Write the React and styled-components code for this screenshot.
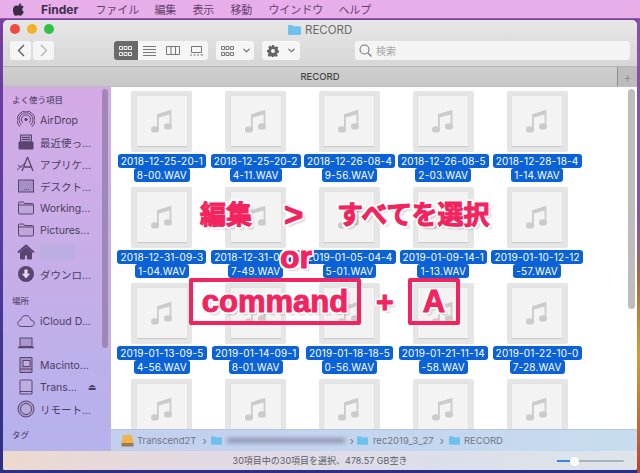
import React from "react"
import styled, { createGlobalStyle } from "styled-components"

const sans = `Inter, "Noto Sans CJK JP", "Liberation Sans", sans-serif`
const ink = "#5b4470"

const files = [
  ["2018-12-25-20-1", "8-00.WAV"],
  ["2018-12-25-20-2", "4-11.WAV"],
  ["2018-12-26-08-4", "9-56.WAV"],
  ["2018-12-26-08-5", "2-03.WAV"],
  ["2018-12-28-18-4", "1-14.WAV"],
  ["2018-12-31-09-3", "1-04.WAV"],
  ["2018-12-31-09-3", "7-49.WAV"],
  ["2019-01-05-04-4", "5-01.WAV"],
  ["2019-01-09-14-1", "1-13.WAV"],
  ["2019-01-10-12-12", "-57.WAV"],
  ["2019-01-13-09-5", "4-56.WAV"],
  ["2019-01-14-09-1", "8-01.WAV"],
  ["2019-01-18-18-5", "0-56.WAV"],
  ["2019-01-21-11-14", "-58.WAV"],
  ["2019-01-22-10-0", "7-28.WAV"],
  ["", ""],
  ["", ""],
  ["", ""],
  ["", ""],
  ["", ""],
]

const menus = [
  ["ファイル", 17],
  ["編集", 15],
  ["表示", 16],
  ["移動", 16],
  ["ウインドウ", 16],
  ["ヘルプ", 15],
]

const Folder = ({ w = 13, h = 10, color = "#6fc0ec" }) => (
  <svg width={w} height={h} viewBox="0 0 13 10">
    <path d="M0 1.2C0 .5.5 0 1.2 0h3.1l1.2 1.3h6.3c.7 0 1.2.5 1.2 1.2v6.3c0 .7-.5 1.2-1.2 1.2H1.2C.5 10 0 9.5 0 8.8z" fill={color} />
  </svg>
)

const Note = () => (
  <svg width="22" height="24" viewBox="0 0 22 24" fill="#cbcbcb">
    <path d="M6 5.2 20.4.8v16.6h-1.8V5.4L7.8 8.6v11.6H6z" />
    <ellipse cx="4" cy="20.4" rx="4" ry="3.2" />
    <ellipse cx="17" cy="17.4" rx="4" ry="3.2" />
  </svg>
)

const Glyph = ({ children }) => (
  <svg width="18" height="18" viewBox="0 0 18 18" fill="none" stroke={ink} strokeWidth="1">
    {children}
  </svg>
)

const AirDropIcon = () => (
  <Glyph>
    <circle cx="9" cy="8.5" r="1.2" fill={ink} />
    <path d="M6 12a4.6 4.6 0 1 1 6 0M4.4 14a7 7 0 1 1 9.2 0M3 15.7a9 9 0 1 1 12 0" />
  </Glyph>
)
const RecentIcon = () => (
  <Glyph>
    <rect x="3.5" y="2" width="11" height="7" fill="#a98fc4" />
    <path d="M5 4.5h8M5 6.5h8" />
    <path d="M2 9h14v7H2z" fill={ink} />
  </Glyph>
)
const AppsIcon = () => (
  <Glyph>
    <path d="M10.5 2 5 16M10.5 2 16 16M6.5 12h8" strokeWidth="1.3" />
    <path d="M0 15 8 8M1 10.5l4 1.5" />
  </Glyph>
)
const DesktopIcon = () => (
  <Glyph>
    <rect x="1.5" y="3" width="15" height="12" fill="#a58fc8" />
    <path d="M7 12.5h.8M9 12.5h.8M11 12.5h.8" />
  </Glyph>
)
const FolderIcon = () => (
  <Glyph>
    <path d="M1.5 4c0-.6.4-1 1-1h4l1.2 1.5h7.8c.6 0 1 .4 1 1V14c0 .6-.4 1-1 1h-13c-.6 0-1-.4-1-1z" fill="#bda6d8" />
    <path d="M1.5 6h15" />
  </Glyph>
)
const HomeIcon = () => (
  <Glyph>
    <path d="M1 9.5 9 2.5l8 7" strokeWidth="1.8" />
    <path d="M3.5 9v7h4v-4h3v4h4V9L9 4.5z" fill={ink} />
  </Glyph>
)
const DownloadIcon = () => (
  <svg width="18" height="18" viewBox="0 0 18 18">
    <circle cx="9" cy="9" r="8" fill={ink} />
    <path d="M7.4 4.5h3.2v4.2h2.6L9 13.4 4.8 8.7h2.6z" fill="#e4d8f2" />
  </svg>
)
const CloudIcon = () => (
  <Glyph>
    <path d="M4.5 14.5C2.2 14.5.8 13 .8 11.3c0-1.7 1.2-3 2.9-3.2C4.2 5.3 6.3 3.5 8.800 3.5c2.7 0 4.7 2 5 4.5 1.9.2 3.4 1.5 3.4 3.3 0 1.8-1.5 3.2-3.5 3.2z" />
  </Glyph>
)
const LaptopIcon = () => (
  <Glyph>
    <rect x="3" y="4" width="12" height="8.5" fill="#a997cc" />
    <path d="M1 13.5h16" strokeWidth="1.6" />
  </Glyph>
)
const MacDriveIcon = () => (
  <Glyph>
    <path d="M3 1.5h12v15H3z" fill="#a58fc4" />
    <rect x="6" y="4.5" width="7" height="6" fill="#c0aedb" />
    <path d="M3 13h12" />
  </Glyph>
)
const DriveIcon = () => (
  <Glyph>
    <path d="M4 2h10c.6 0 1 .4 1 1v13H3V3c0-.6.4-1 1-1z" fill="#bcaee0" />
    <path d="M3 13.5h12" />
  </Glyph>
)
const DiscIcon = () => (
  <Glyph>
    <circle cx="9" cy="9" r="8" fill="#a99ad0" />
    <circle cx="9" cy="9" r="5.5" fill="#b6aadb" />
  </Glyph>
)

const places = [
  { icon: <CloudIcon />, label: "iCloud D..." },
  { icon: <LaptopIcon />, label: "" },
  { icon: <MacDriveIcon />, label: "Macinto..." },
  { icon: <DriveIcon />, label: "Trans...", eject: true },
  { icon: <DiscIcon />, label: "リモート…" },
]

const favourites = [
  { icon: <AirDropIcon />, label: "AirDrop" },
  { icon: <RecentIcon />, label: "最近使っ…" },
  { icon: <AppsIcon />, label: "アプリケ…" },
  { icon: <DesktopIcon />, label: "デスクト…" },
  { icon: <FolderIcon />, label: "Working..." },
  { icon: <FolderIcon />, label: "Pictures..." },
  { icon: <HomeIcon />, hidden: true },
  { icon: <DownloadIcon />, label: "ダウンロ…" },
]

export default function App() {
  return (
    <Desktop>
      <GlobalStyle />
      <MenuBar>
        <AppleLogo viewBox="0 0 14 16">
          <path d="M10.3 0c.1 1.1-.3 2.1-.9 2.9-.7.8-1.7 1.3-2.6 1.2C6.700 3 7.200 2 7.800 1.300 8.400.6 9.500.1 10.300 0zM13.500 11.400c-.4.9-.6 1.300-1.100 2.100-.7 1.100-1.700 2.400-2.900 2.400-1.100 0-1.400-.7-2.900-.7s-1.800.7-2.900.7c-1.200 0-2.200-1.200-2.900-2.300C-.2 10.600-.4 7 .8 5.100c.9-1.300 2.200-2.100 3.500-2.100s2.100.7 3.100.7c1 0 1.600-.7 3.100-.7 1.100 0 2.300.6 3.100 1.700-2.800 1.500-2.300 5.500.9 6.700z" />
        </AppleLogo>
        <AppName>Finder</AppName>
        {menus.map(([name, gap]) => (
          <MenuItem key={name} $gap={gap}>{name}</MenuItem>
        ))}
      </MenuBar>

      <Window>
        <TitleBar>
          <Lights>
            <Light $color="#f0493e" />
            <Light $color="#f6b026" />
            <Light $color="#2fc244" />
          </Lights>
          <WindowTitle>
            <Folder />
            RECORD
          </WindowTitle>
          <Toolbar>
            <NavGroup>
              <NavButton>
                <svg width="8" height="13" viewBox="0 0 8 13" fill="none" stroke="#555" strokeWidth="1.3"><path d="M7 1 1.5 6.5 7 12" /></svg>
              </NavButton>
              <NavButton>
                <svg width="8" height="13" viewBox="0 0 8 13" fill="none" stroke="#b5b5b5" strokeWidth="1.3"><path d="M1 1l5.500 5.500L1 12" /></svg>
              </NavButton>
            </NavGroup>
            <ViewGroup>
              <ViewButton $active>
                <GridGlyph color="#f0f0f0" />
              </ViewButton>
              <ViewButton>
                <svg width="13" height="10" viewBox="0 0 13 10" stroke="#777" strokeWidth="1"><path d="M0 .5h13M0 3.5h13M0 6.5h13M0 9.5h13" /></svg>
              </ViewButton>
              <ViewButton>
                <svg width="14" height="9" viewBox="0 0 14 9" fill="none" stroke="#777" strokeWidth="1"><path d="M.5.5h13v8H.5zM5 .5v8M9.5.5v8" /></svg>
              </ViewButton>
              <ViewButton>
                <svg width="13" height="10" viewBox="0 0 13 10" fill="none" stroke="#777" strokeWidth="1"><path d="M1.5.5h10v6h-10zM0 9h2M3.5 9h2M7 9h2M10.5 9H13" /></svg>
              </ViewButton>
            </ViewGroup>
            <DropButton>
              <GridGlyph color="#777" />
              <Chevron />
            </DropButton>
            <DropButton>
              <svg width="12" height="12" viewBox="0 0 12 12" fill="#666">
                <path d="M4.900 0h2.200l.3 1.600 1.100.5L9.900 1.200l1.500 1.600-.9 1.300.5 1.100 1 .2v2.200l-1.600.3-.5 1.100.9 1.400-1.500 1.500-1.400-.9-1.100.5-.3 1.500H4.900l-.3-1.500-1.100-.5-1.400.9L.6 9.900l.9-1.400-.5-1.100L0 7.100V4.900l1.600-.3.5-1.100-.9-1.300 1.500-1.600 1.400.9 1.100-.5zM6 4a2 2 0 1 0 0 4 2 2 0 0 0 0-4z" />
              </svg>
              <Chevron />
            </DropButton>
            <SearchBox>
              <svg width="13" height="13" viewBox="0 0 13 13" fill="none" stroke="#777" strokeWidth="1.1"><circle cx="5.5" cy="5.5" r="4.5" /><path d="m9 9 3.5 3.5" /></svg>
              <span>検索</span>
            </SearchBox>
          </Toolbar>
        </TitleBar>

        <TabBar>
          <TabTitle>RECORD</TabTitle>
          <AddTab>+</AddTab>
        </TabBar>

        <Body>
          <Sidebar>
            <SideHeading>よく使う項目</SideHeading>
            {favourites.map((f, i) => (
              <SideRow key={i}>
                {f.icon}
                {f.hidden ? <HiddenName /> : <span>{f.label}</span>}
              </SideRow>
            ))}
            <SideHeading $top={10}>場所</SideHeading>
            {places.map((p, i) => (
              <SideRow key={i}>
                {p.icon}
                <span>{p.label}</span>
                {p.eject && <Eject>⏏</Eject>}
              </SideRow>
            ))}
            <SideHeading $top={9}>タグ</SideHeading>
            <SideScroll />
          </Sidebar>

          <Main>
            <Files>
              <FileGrid>
                {files.map((f, i) => (
                  <FileCell key={i}>
                    <Thumb>
                      <ThumbInner><Note /></ThumbInner>
                    </Thumb>
                    {f[0] && (
                      <Name>
                        <NameLine>{f[0]}</NameLine>
                        <NameLine>{f[1]}</NameLine>
                      </Name>
                    )}
                  </FileCell>
                ))}
              </FileGrid>
              <MainScroll />
            </Files>
            <PathBar>
              <svg width="13" height="12" viewBox="0 0 13 12">
                <path d="M2 0h9l1.500 8h-12z" fill="#f0b24a" />
                <path d="M.5 8h12v3.500H.5z" fill="#9a7a50" />
              </svg>
              <PathText $gap={3}>Transcend2T</PathText>
              <PathSep $left={6}>›</PathSep>
              <PathFolder $left={4}><Folder w={11} h={9} /></PathFolder>
              <BlurName />
              <PathSep $left={5}>›</PathSep>
              <PathFolder $left={3}><Folder w={11} h={9} /></PathFolder>
              <PathText $gap={5}>rec2019_3_27</PathText>
              <PathSep $left={6}>›</PathSep>
              <PathFolder $left={5}><Folder w={11} h={9} /></PathFolder>
              <PathText $gap={4}>RECORD</PathText>
            </PathBar>
          </Main>
        </Body>

        <StatusBar>
          <StatusText>30項目中の30項目を選択、478.57 GB空き</StatusText>
          <Slider>
            <SliderFill />
            <SliderKnob />
          </Slider>
        </StatusBar>

        <Callout $x={197} $y={177} $size={26}>編集</Callout>
        <Callout $x={281} $y={177} $size={33}>&gt;</Callout>
        <Callout $x={334} $y={177} $size={26}>すべてを選択</Callout>
        <Callout $x={277} $y={219} $size={32}>or</Callout>
        <KeyBox $x={186} $w={172}><Callout as="span" $static $size={31}>command</Callout></KeyBox>
        <Callout $x={373} $y={264} $size={30}>+</Callout>
        <KeyBox $x={405} $w={52}><Callout as="span" $static $size={31}>A</Callout></KeyBox>
      </Window>
    </Desktop>
  )
}

const GridGlyph = ({ color }) => (
  <svg width="13" height="10" viewBox="0 0 13 10" fill="none" stroke={color} strokeWidth="1">
    <path d="M.5.5h3v3h-3zM5 .5h3v3H5zM9.5.5h3v3h-3zM.5 6.5h3v3h-3zM5 6.5h3v3H5zM9.5 6.5h3v3h-3z" />
  </svg>
)

const Chevron = () => (
  <svg width="7" height="5" viewBox="0 0 7 5" fill="none" stroke="#666" strokeWidth="1.1"><path d="m.5.8 3 3 3-3" /></svg>
)

const GlobalStyle = createGlobalStyle`
  html, body { margin: 0; padding: 0; }
  body { font-family: ${sans}; width: 640px; height: 473px; overflow: hidden; }
  * { box-sizing: border-box; }
`

const Desktop = styled.div`
  width: 640px;
  height: 473px;
  overflow: hidden;
  display: flex;
  flex-direction: column;
  background:
    linear-gradient(180deg, #8a4fa6 0%, #8a4fa6 45%, #a8703a 60%, #d0a030 75%, #c04030 100%) right top / 3px 100% no-repeat,
    linear-gradient(180deg, #7a3f9f 0%, #4f3a9e 55%, #2c2f80 100%);
`

const MenuBar = styled.div`
  height: 19px;
  flex: none;
  display: flex;
  align-items: center;
  padding-left: 13px;
  background: #e8aeea;
  border-bottom: 1px solid #93599f;
  font-size: 11px;
  color: #64406f;
`

const AppleLogo = styled.svg`
  width: 11px;
  height: 13px;
  fill: #3a2d42;
`

const AppName = styled.b`
  margin-left: 17px;
  font-size: 12px;
  color: #3d2f4a;
`

const MenuItem = styled.span`
  margin-left: ${p => p.$gap}px;
`

const Window = styled.div`
  position: relative;
  width: 634px;
  height: 450px;
  margin: 1px 0 0 3px;
  display: flex;
  flex-direction: column;
  overflow: hidden;
  border-radius: 5px 5px 2px 2px;
  background: #ddd;
`

const TitleBar = styled.div`
  height: 46px;
  flex: none;
  background: linear-gradient(180deg, #e7e7e7, #d6d6d6);
  position: relative;
  padding: 21px 7px 0;
`

const Lights = styled.div`
  position: absolute;
  left: 7px;
  top: 4px;
  display: flex;
  gap: 7px;
`

const Light = styled.i`
  width: 10px;
  height: 10px;
  border-radius: 50%;
  background: ${p => p.$color};
`

const WindowTitle = styled.div`
  position: absolute;
  left: 285px;
  top: 3px;
  display: flex;
  align-items: center;
  gap: 4px;
  font-size: 11.5px;
  color: #6a6a6a;
`

const Toolbar = styled.div`
  display: flex;
  align-items: center;
  height: 19px;
`

const NavGroup = styled.div`
  display: flex;
  gap: 2px;
  width: 104px;
`

const NavButton = styled.div`
  width: 21px;
  height: 19px;
  display: flex;
  align-items: center;
  justify-content: center;
  background: #f5f5f5;
  border-radius: 3px;
`

const ViewGroup = styled.div`
  display: flex;
  width: 94px;
  height: 19px;
  background: #f5f5f5;
  border-radius: 3px;
  overflow: hidden;
`

const ViewButton = styled.div`
  flex: 1;
  display: flex;
  align-items: center;
  justify-content: center;
  background: ${p => (p.$active ? "#6a6a6a" : "transparent")};
`

const DropButton = styled.div`
  width: 38px;
  height: 19px;
  margin-left: 8px;
  display: flex;
  align-items: center;
  justify-content: center;
  gap: 9px;
  background: #f5f5f5;
  border-radius: 3px;
`

const SearchBox = styled.div`
  width: 275px;
  height: 19px;
  margin-left: 55px;
  padding-left: 4px;
  display: flex;
  align-items: center;
  gap: 4px;
  background: #f4f4f4;
  border-radius: 3px;
  font-size: 10px;
  color: #a5a5a5;
`

const TabBar = styled.div`
  height: 21px;
  flex: none;
  position: relative;
  display: flex;
  align-items: center;
  justify-content: center;
  background: linear-gradient(180deg, #cfcfcf, #c6c6c6);
  border-top: 1px solid #b5b5b5;
  border-bottom: 1px solid #bdbdbd;
`

const TabTitle = styled.span`
  font-size: 9.5px;
  font-weight: 500;
  color: #444;
`

const AddTab = styled.span`
  position: absolute;
  right: 0;
  top: 0;
  bottom: 0;
  width: 20px;
  display: flex;
  align-items: center;
  justify-content: center;
  background: #bcbcbc;
  border-left: 1px solid #8f8f8f;
  color: #8a8a8a;
  font-size: 14px;
  font-weight: 300;
`

const Body = styled.div`
  flex: 1;
  min-height: 0;
  display: flex;
`

const Sidebar = styled.div`
  width: 108px;
  flex: none;
  position: relative;
  padding: 7px 0 0 6px;
  background: linear-gradient(180deg, #d4aae6 0%, #c6aee8 50%, #b5b2ec 100%);
  border-right: 1px solid #c2b2dc;
  overflow: hidden;
`

const SideHeading = styled.div`
  height: 12px;
  line-height: 12px;
  margin: ${p => p.$top || 0}px 0 3px 3px;
  font-size: 8.5px;
  font-weight: 500;
  color: #5c4b72;
`

const SideRow = styled.div`
  height: 22px;
  display: flex;
  align-items: center;
  gap: 5px;
  padding-left: 8px;
  font-size: 10.5px;
  white-space: nowrap;
  color: #4a3c63;
`

const HiddenName = styled.i`
  width: 35px;
  height: 15px;
  background: #bcaee2;
`

const Eject = styled.span`
  margin-left: 6px;
  font-size: 9px;
  font-family: "DejaVu Sans", sans-serif;
`

const SideScroll = styled.div`
  position: absolute;
  right: 2px;
  top: 2px;
  width: 6px;
  height: 259px;
  border-radius: 3px;
  background: #9f88b8;
`

const Main = styled.div`
  flex: 1;
  min-width: 0;
  display: flex;
  flex-direction: column;
`

const Files = styled.div`
  flex: 1;
  min-height: 0;
  position: relative;
  overflow: hidden;
  background: #fff;
  padding: 4px 0 0 4px;
`

const FileGrid = styled.div`
  display: grid;
  grid-template-columns: repeat(5, 93.8px);
  grid-auto-rows: 96px;
`

const FileCell = styled.div`
  display: flex;
  flex-direction: column;
  align-items: center;
`

const Thumb = styled.div`
  width: 61px;
  height: 61px;
  flex: none;
  display: flex;
  align-items: center;
  justify-content: center;
  background: #e5e5e5;
  border-radius: 2px;
`

const ThumbInner = styled.div`
  width: 50px;
  height: 51px;
  display: flex;
  align-items: center;
  justify-content: center;
  background: #f3f3f3;
  border-bottom: 1px solid #c9c9c9;
  box-shadow: 0 0 1px #cfcfcf;
`

const Name = styled.div`
  margin-top: 2px;
  display: flex;
  flex-direction: column;
  align-items: center;
`

const NameLine = styled.span`
  height: 14px;
  line-height: 14px;
  padding: 0 3px;
  background: #0b62d6;
  border-radius: 3px;
  font-size: 10px;
  letter-spacing: .2px;
  white-space: nowrap;
  color: #fff;
`

const MainScroll = styled.div`
  position: absolute;
  right: 2px;
  top: 2px;
  width: 7px;
  height: 220px;
  border-radius: 4px;
  background: #bdbdbd;
`

const PathBar = styled.div`
  height: 22px;
  flex: none;
  display: flex;
  align-items: center;
  padding-left: 10px;
  background: linear-gradient(90deg, #c2cfee, #c4d6ee 60%, #c8dcef);
  border-top: 1px solid #b8c4e0;
`

const PathText = styled.span`
  margin-left: ${p => p.$gap}px;
  font-size: 9.5px;
  color: #6f7688;
`

const PathSep = styled.span`
  margin-left: ${p => p.$left}px;
  font-size: 11px;
  color: #6f7688;
`

const PathFolder = styled.span`
  display: flex;
  margin-left: ${p => p.$left}px;
`

const BlurName = styled.i`
  width: 118px;
  height: 5px;
  margin-left: 5px;
  background: #8d95b0;
  filter: blur(2px);
`

const StatusBar = styled.div`
  height: 19px;
  flex: none;
  position: relative;
  display: flex;
  align-items: center;
  justify-content: center;
  background: linear-gradient(90deg, #ecd9cf, #e2d9e6 35%, #dbdfea 70%, #dde4ea);
`

const StatusText = styled.span`
  font-size: 9px;
  color: #5c5c66;
`

const Slider = styled.div`
  position: absolute;
  left: 554px;
  top: 9px;
  width: 67px;
  height: 2px;
  border-radius: 1px;
  background: #aeb2bc;
`

const SliderFill = styled.div`
  width: 17px;
  height: 100%;
  background: #3b82e6;
`

const SliderKnob = styled.div`
  position: absolute;
  left: 13px;
  top: -3.5px;
  width: 9px;
  height: 9px;
  border-radius: 50%;
  background: #fff;
`

const Callout = styled.div`
  position: ${p => (p.$static ? "static" : "absolute")};
  left: ${p => p.$x}px;
  top: ${p => p.$y}px;
  font-family: "Liberation Sans", "Noto Sans CJK JP", sans-serif;
  font-size: ${p => p.$size}px;
  font-weight: 700;
  line-height: 36px;
  white-space: nowrap;
  color: #f2245f;
  -webkit-text-stroke: 1px #f2245f;
  text-shadow:
    2px 0 0 #fff, -2px 0 0 #fff, 0 2px 0 #fff, 0 -2px 0 #fff,
    2px 2px 0 #fff, -2px 2px 0 #fff, 2px -2px 0 #fff, -2px -2px 0 #fff,
    3px 3px 2px rgba(0, 0, 0, .2);
`

const KeyBox = styled.div`
  position: absolute;
  left: ${p => p.$x}px;
  top: 258px;
  width: ${p => p.$w}px;
  height: 47px;
  display: flex;
  align-items: center;
  justify-content: center;
  border: 4px solid #f2245f;
  border-radius: 2px;
`
